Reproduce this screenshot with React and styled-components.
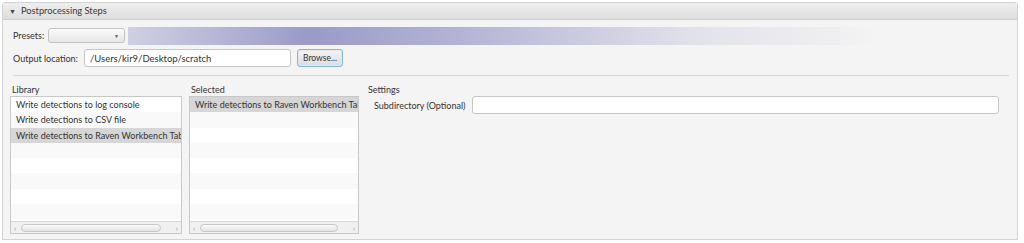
import React from "react";
import styled, { createGlobalStyle } from "styled-components";

const GlobalStyle = createGlobalStyle`
  body {
    margin: 0;
    background: #ffffff;
    font-family: Lato, "Open Sans", sans-serif;
    color: #333333;
  }
`;

const Panel = styled.div`
  margin: 2px 0 0 2px;
  width: 1016px;
  height: 238px;
  box-sizing: border-box;
  border: 1px solid #d2d2d2;
  border-radius: 3px 3px 0 0;
  background: #f4f4f4;
  display: flex;
  flex-direction: column;
`;

const TitleBar = styled.div`
  height: 17px;
  flex: none;
  display: flex;
  align-items: center;
  gap: 5px;
  padding-left: 6px;
  padding-bottom: 1px;
  box-sizing: border-box;
  background: linear-gradient(#efefef, #dedede);
  border-bottom: 1px solid #cfcfcf;
  font-size: 9.3px;
  color: #3a3a3a;
`;

const Arrow = styled.span`
  font-size: 7px;
  color: #444;
`;

const Body = styled.div`
  flex: 1;
  display: flex;
  flex-direction: column;
  padding: 8px 7px 6px 7px;
`;

const Row = styled.div`
  display: flex;
  align-items: center;
  height: ${(p) => p.h}px;
  margin-top: ${(p) => p.mt || 0}px;
`;

const Label = styled.span`
  font-size: 9px;
  color: #333;
  padding-left: ${(p) => p.indent || 3}px;
  width: ${(p) => (p.w ? p.w + "px" : "auto")};
  box-sizing: border-box;
  flex: none;
  white-space: nowrap;
`;

const Combo = styled.div`
  width: 77px;
  height: 15px;
  box-sizing: border-box;
  border: 1px solid #c3c3c3;
  border-radius: 3px;
  background: linear-gradient(#fbfbfb, #e6e6e6);
  display: flex;
  align-items: center;
  justify-content: flex-end;
  padding-right: 5px;
  font-size: 5px;
  color: #555;
  flex: none;
`;

const Glow = styled.div`
  flex: 1;
  align-self: stretch;
  margin: -1px 130px -2px 3px;
  background: linear-gradient(
    to right,
    rgba(155, 154, 200, 0.4) 0%,
    rgba(155, 154, 200, 1) 24%,
    rgba(160, 159, 203, 0.75) 45%,
    rgba(190, 190, 215, 0.35) 75%,
    rgba(244, 244, 244, 0) 100%
  );
`;

const TextField = styled.div`
  height: 18px;
  box-sizing: border-box;
  width: ${(p) => (p.w ? p.w + "px" : "auto")};
  flex: ${(p) => (p.w ? "none" : 1)};
  border: 1px solid #c6c6c6;
  border-radius: 3px;
  background: #ffffff;
  display: flex;
  align-items: center;
  padding-left: 5px;
  font-size: 9.5px;
  color: #333;
`;

const Button = styled.div`
  margin-left: 6px;
  width: 46px;
  height: 18px;
  box-sizing: border-box;
  border: 1px solid #7fb6e2;
  border-radius: 3px;
  background: linear-gradient(#f4f4f4, #dcdcdc);
  box-shadow: inset 0 0 0 1px #e8e8e8;
  display: flex;
  align-items: center;
  justify-content: center;
  font-size: 8.5px;
  color: #333;
`;

const Separator = styled.div`
  height: 1px;
  background: #d6d6d6;
  margin: 8px 1px 0 3px;
`;

const Columns = styled.div`
  flex: 1;
  display: flex;
  gap: 7px;
  margin-top: 8px;
`;

const Column = styled.div`
  display: flex;
  flex-direction: column;
  width: ${(p) => (p.w ? p.w + "px" : "auto")};
  flex: ${(p) => (p.w ? "none" : 1)};
`;

const Caption = styled.div`
  font-size: 9px;
  color: #333;
  height: 12px;
  line-height: 12px;
  padding-left: 2px;
`;

const List = styled.div`
  height: 138px;
  box-sizing: border-box;
  border: 1px solid #c8c8c8;
  background: #ffffff;
  display: flex;
  flex-direction: column;
  overflow: hidden;
`;

const Rows = styled.div`
  flex: 1;
  overflow: hidden;
`;

const Cell = styled.div`
  height: 15.3px;
  line-height: 15px;
  padding-left: 5px;
  font-size: 9px;
  color: #333;
  white-space: nowrap;
  overflow: hidden;
  background: ${(p) => (p.selected ? "#d6d6d6" : p.odd ? "#f9f9f9" : "#ffffff")};
`;

const ScrollBar = styled.div`
  height: 11px;
  flex: none;
  border-top: 1px solid #d8d8d8;
  background: #f0f0f0;
  display: flex;
  align-items: center;
  padding: 0 3px;
  gap: 5px;
  font-size: 8px;
  color: #999;
`;

const Thumb = styled.div`
  flex: 1;
  height: 8px;
  box-sizing: border-box;
  border: 1px solid #c9c9c9;
  border-radius: 4px;
  background: linear-gradient(#fbfbfb, #e3e3e3);
  margin-right: 10px;
`;

const SettingsRow = styled.div`
  display: flex;
  align-items: center;
  padding-right: 11px;
`;

const libraryItems = [
  "Write detections to log console",
  "Write detections to CSV file",
  "Write detections to Raven Workbench Table",
];

const ListBox = ({ items, selected }) => {
  const rows = [];
  for (let i = 0; i < 8; i++) {
    rows.push(
      <Cell key={i} odd={i % 2 === 1} selected={i === selected}>
        {items[i] || ""}
      </Cell>
    );
  }
  return (
    <List>
      <Rows>{rows}</Rows>
      <ScrollBar>
        <span>‹</span>
        <Thumb />
        <span>›</span>
      </ScrollBar>
    </List>
  );
};

export default function App() {
  return (
    <>
      <GlobalStyle />
      <Panel>
        <TitleBar>
          <Arrow>▼</Arrow>
          <span>Postprocessing Steps</span>
        </TitleBar>
        <Body>
          <Row h={15} mt={0}>
            <Label w={38}>Presets:</Label>
            <Combo>▼</Combo>
            <Glow />
          </Row>
          <Row h={18} mt={6}>
            <Label w={74}>Output location:</Label>
            <TextField w={207}>/Users/kir9/Desktop/scratch</TextField>
            <Button>Browse...</Button>
          </Row>
          <Separator />
          <Columns>
            <Column w={172}>
              <Caption>Library</Caption>
              <ListBox items={libraryItems} selected={2} />
            </Column>
            <Column w={170}>
              <Caption>Selected</Caption>
              <ListBox items={["Write detections to Raven Workbench Table"]} selected={0} />
            </Column>
            <Column>
              <Caption>Settings</Caption>
              <SettingsRow>
                <Label indent={8} w={106}>Subdirectory (Optional)</Label>
                <TextField />
              </SettingsRow>
            </Column>
          </Columns>
        </Body>
      </Panel>
    </>
  );
}
